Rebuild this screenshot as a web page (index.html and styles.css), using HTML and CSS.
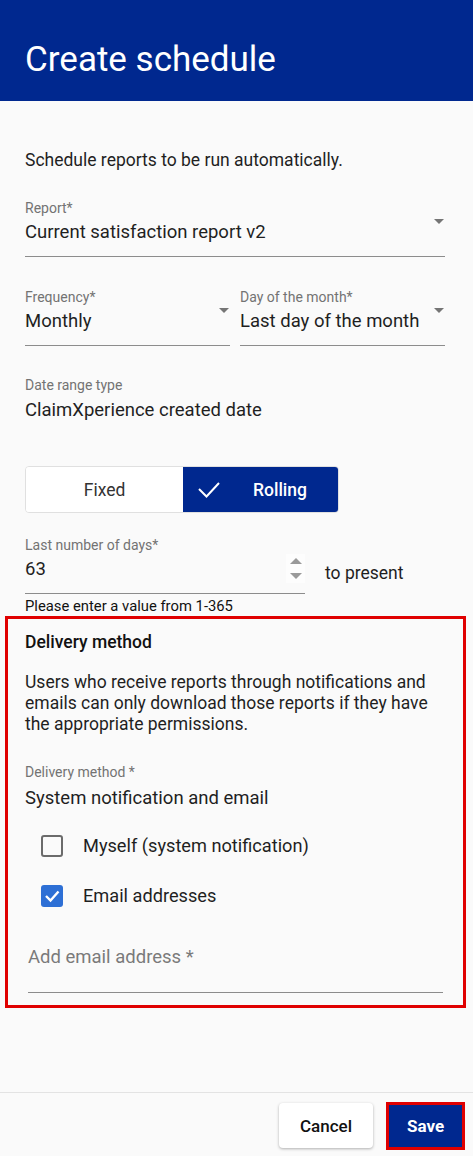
FILE: index.html
```html
<!DOCTYPE html>
<html lang="en">
  <head>
    <title>Create schedule</title>
    <link rel="stylesheet" href="styles.css">
  </head>
  <body>
    <div class="page">
      <header class="top-bar">
        <h1>Create schedule</h1>
      </header>

      <main class="content">
        <p class="intro">Schedule reports to be run automatically.</p>

        <div class="field select-field report-field">
          <div class="field-text">
            <div class="field-label">Report*</div>
            <div class="field-value">Current satisfaction report v2</div>
          </div>
          <span class="arrow"></span>
        </div>

        <div class="field-row">
          <div class="field select-field">
            <div class="field-text">
              <div class="field-label">Frequency*</div>
              <div class="field-value">Monthly</div>
            </div>
            <span class="arrow"></span>
          </div>
          <div class="field select-field">
            <div class="field-text">
              <div class="field-label">Day of the month*</div>
              <div class="field-value">Last day of the month</div>
            </div>
            <span class="arrow"></span>
          </div>
        </div>

        <div class="static-field">
          <div class="field-label">Date range type</div>
          <div class="field-value">ClaimXperience created date</div>
        </div>

        <div class="toggle-group">
          <div class="toggle">Fixed</div>
          <div class="toggle toggle-on">
            <svg class="toggle-check" width="22" height="18" viewBox="0 0 22 18">
              <path d="M1 8 L8.5 15.5 L21 2" fill="none" stroke="#fff" stroke-width="2"/>
            </svg>
            <span>Rolling</span>
          </div>
        </div>

        <div class="days-row">
          <div class="field days-field">
            <div class="field-text">
              <div class="field-label">Last number of days*</div>
              <div class="field-value">63</div>
            </div>
            <div class="spinner">
              <span class="spin-up"></span>
              <span class="spin-down"></span>
            </div>
          </div>
          <span class="days-suffix">to present</span>
        </div>
        <div class="hint">Please enter a value from 1-365</div>

        <section class="delivery">
          <h2>Delivery method</h2>
          <p class="delivery-note">Users who receive reports through notifications and emails can only download those reports if they have the appropriate permissions.</p>

          <div class="static-field">
            <div class="field-label">Delivery method *</div>
            <div class="field-value">System notification and email</div>
          </div>

          <div class="check-list">
            <label class="check-row">
              <span class="checkbox"></span>
              <span>Myself (system notification)</span>
            </label>
            <label class="check-row">
              <span class="checkbox checked">
                <svg width="22" height="22" viewBox="0 0 22 22">
                  <path d="M5 11 L9.5 15.5 L17.5 6.5" fill="none" stroke="#fff" stroke-width="2.4"/>
                </svg>
              </span>
              <span>Email addresses</span>
            </label>
          </div>

          <div class="email-field">Add email address *</div>
        </section>
      </main>

      <footer class="actions">
        <button class="btn btn-cancel">Cancel</button>
        <button class="btn btn-save">Save</button>
      </footer>
    </div>
  </body>
</html>
```

FILE: styles.css
```css
body {
  margin: 0;
  background-color: #fafafa;
  font-family: Roboto, "Liberation Sans", sans-serif;
  color: #1f1f1f;
}
.page {
  display: flex;
  flex-direction: column;
  min-height: 100vh;
}
.top-bar {
  height: 101px;
  background-color: #00288f;
  color: #fff;
  padding: 40px 25px 0;
  box-sizing: border-box;
}
.top-bar h1 {
  margin: 0;
  font-size: 35px;
  font-weight: 400;
  line-height: 40px;
}
.content {
  flex: 1;
  padding: 49px 28px 0 25px;
}
.intro {
  margin: 0 0 30px;
  font-size: 17.5px;
  line-height: 20px;
}
.field-label {
  font-size: 14px;
  line-height: 16px;
  color: #737373;
}
.field-value {
  margin-top: 6px;
  font-size: 18.5px;
  line-height: 20px;
  white-space: nowrap;
}
.field {
  display: flex;
  border-bottom: 1px solid #8c8c8c;
  padding-bottom: 14px;
}
.field-text {
  flex: 1;
}
.report-field {
  margin-bottom: 32px;
}
.field-row {
  display: flex;
  gap: 10px;
  margin-bottom: 31px;
}
.field-row .field {
  flex: 1;
}
.arrow {
  width: 0;
  height: 0;
  margin: 19px 1px 0 0;
  border-left: 5.5px solid transparent;
  border-right: 5.5px solid transparent;
  border-top: 5.5px solid #757575;
}
.static-field .field-value {
  margin-top: 7px;
}
.toggle-group {
  display: flex;
  width: 314px;
  height: 47px;
  margin-top: 46px;
  border: 1px solid #e0e0e0;
  border-radius: 4px;
  box-sizing: border-box;
  overflow: hidden;
  font-size: 17.5px;
}
.toggle {
  display: flex;
  align-items: center;
  justify-content: center;
  width: 157px;
  background-color: #fff;
  color: #333;
}
.toggle-on {
  flex: 1;
  justify-content: flex-start;
  padding-left: 15px;
  background-color: #00288f;
  color: #fff;
  font-weight: 500;
}
.toggle-check {
  margin-right: 33px;
}
.days-row {
  display: flex;
  align-items: flex-end;
  margin-top: 24px;
}
.days-field {
  width: 280px;
}
.spinner {
  display: flex;
  flex-direction: column;
  align-items: center;
  justify-content: space-between;
  width: 19px;
  height: 29px;
  margin: 17px 0 -4px;
  padding: 4px 0;
  box-sizing: border-box;
  background-color: #fdfdfd;
}
.spin-up,
.spin-down {
  width: 0;
  height: 0;
  border-left: 6px solid transparent;
  border-right: 6px solid transparent;
}
.spin-up {
  border-bottom: 6px solid #9a9a9a;
}
.spin-down {
  border-top: 6px solid #9a9a9a;
}
.days-suffix {
  margin: 0 0 11px 20px;
  font-size: 17.5px;
  line-height: 20px;
}
.hint {
  margin-top: 4px;
  font-size: 14.8px;
  line-height: 16px;
  color: #111;
}
.delivery {
  margin: 2px -21px 0 -20px;
  padding: 13px 20px 12px 17px;
  border: 3px solid #e00000;
}
.delivery h2 {
  margin: 0;
  font-size: 17.5px;
  font-weight: 500;
  line-height: 20px;
  color: #111;
}
.delivery-note {
  margin: 20px 0 29px;
  font-size: 17.5px;
  line-height: 21px;
}
.delivery .static-field .field-value {
  margin-top: 8px;
}
.check-list {
  margin-top: 13px;
}
.check-row {
  display: flex;
  align-items: center;
  height: 50px;
  padding-left: 16px;
  font-size: 18.2px;
  line-height: 20px;
}
.checkbox {
  width: 22px;
  height: 22px;
  margin-right: 20px;
  border: 2px solid #6b6b6b;
  border-radius: 3px;
  box-sizing: border-box;
}
.checkbox.checked {
  border: none;
  background-color: #2d6fd5;
}
.checkbox svg {
  display: block;
}
.email-field {
  margin: 26px 0 0 3px;
  padding-bottom: 25px;
  border-bottom: 1px solid #8c8c8c;
  font-size: 18.5px;
  line-height: 20px;
  color: #7a7a7a;
}
.actions {
  display: flex;
  justify-content: flex-end;
  align-items: center;
  gap: 13px;
  height: 64px;
  padding: 2px 8px 0 0;
  border-top: 1px solid #e3e3e3;
  box-sizing: border-box;
}
.btn {
  font-family: Roboto, "Liberation Sans", sans-serif;
  font-size: 17px;
  font-weight: 500;
  border-radius: 4px;
  cursor: pointer;
}
.btn-cancel {
  width: 94px;
  height: 45px;
  border: none;
  background-color: #fff;
  color: #111;
  box-shadow: 0 1px 3px rgba(0, 0, 0, 0.3);
}
.btn-save {
  width: 79px;
  height: 48px;
  border: 3px solid #e00000;
  border-radius: 0;
  background-color: #00288f;
  color: #fff;
  font-weight: 700;
}
```
